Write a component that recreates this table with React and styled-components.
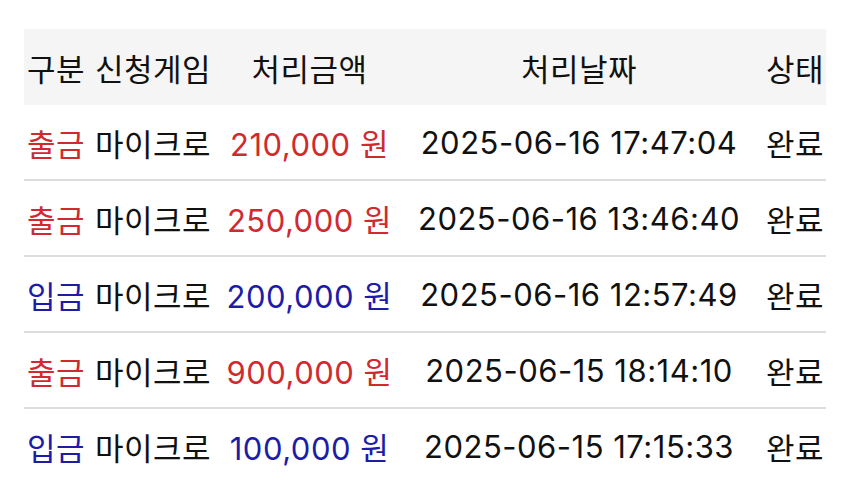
import React from 'react';
import styled, {createGlobalStyle} from 'styled-components';

const GlobalStyle = createGlobalStyle`
    html, body {
        margin: 0;
        padding: 0;
        background: #ffffff;
    }
    body {
        font-family: Inter, "Noto Sans CJK KR", "Noto Sans", sans-serif;
        color: #111111;
    }
`;

const Wrapper = styled.div`
    padding: 29px 24px 0 24px;
`;

const Table = styled.div`
    display: grid;
    grid-template-columns: 66px 125px 189px 350px 72px;
`;

const HeadRow = styled.div`
    display: contents;
`;

const Row = styled.div`
    display: contents;
`;

const Cell = styled.div`
    height: ${(p) => (p.$head ? '76px' : '74px')};
    display: flex;
    align-items: center;
    justify-content: ${(p) => p.$align || 'flex-start'};
    padding: ${(p) => p.$pad || '0'};
    font-size: 31px;
    letter-spacing: 0.5px;
    white-space: nowrap;
    background: ${(p) => (p.$head ? '#f5f5f5' : 'transparent')};
    border-bottom: ${(p) => (p.$line ? '2px solid #dddddd' : 'none')};
    color: ${(p) => p.$color || '#111111'};
`;

const RED = '#cf2a30';
const BLUE = '#1d1ca8';

const rows = [
    {type: '출금', game: '마이크로', amount: '210,000 원', date: '2025-06-16 17:47:04', status: '완료'},
    {type: '출금', game: '마이크로', amount: '250,000 원', date: '2025-06-16 13:46:40', status: '완료'},
    {type: '입금', game: '마이크로', amount: '200,000 원', date: '2025-06-16 12:57:49', status: '완료'},
    {type: '출금', game: '마이크로', amount: '900,000 원', date: '2025-06-15 18:14:10', status: '완료'},
    {type: '입금', game: '마이크로', amount: '100,000 원', date: '2025-06-15 17:15:33', status: '완료'},
];

const columns = [
    {align: 'flex-start', pad: '0 0 0 3px'},
    {align: 'flex-start', pad: '0 0 0 5px'},
    {align: 'center', pad: '0'},
    {align: 'center', pad: '0'},
    {align: 'flex-end', pad: '0 2px 0 0'},
];

const App = () => {
    const headers = ['구분', '신청게임', '처리금액', '처리날짜', '상태'];

    return (
        <>
            <GlobalStyle/>
            <Wrapper>
                <Table>
                    <HeadRow>
                        {headers.map((h, i) => (
                            <Cell key={h} $head $align={columns[i].align} $pad={columns[i].pad}>{h}</Cell>
                        ))}
                    </HeadRow>
                    {rows.map((r, idx) => {
                        const color = r.type === '출금' ? RED : BLUE;
                        const line = idx < rows.length - 1;
                        const values = [r.type, r.game, r.amount, r.date, r.status];
                        const colors = [color, null, color, null, null];
                        return (
                            <Row key={idx}>
                                {values.map((v, i) => (
                                    <Cell
                                        key={i}
                                        $line={line}
                                        $align={columns[i].align}
                                        $pad={columns[i].pad}
                                        $color={colors[i]}
                                    >
                                        {v}
                                    </Cell>
                                ))}
                            </Row>
                        );
                    })}
                </Table>
            </Wrapper>
        </>
    );
};

export default App;
